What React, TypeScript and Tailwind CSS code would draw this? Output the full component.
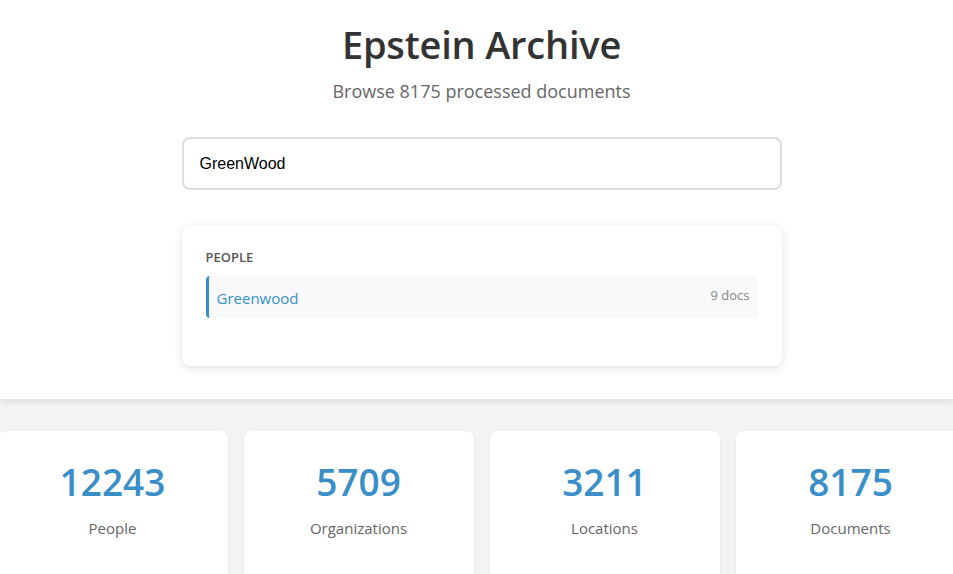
import React from "react";

const stats = [
  { n: "12243", l: "People" },
  { n: "5709", l: "Organizations" },
  { n: "3211", l: "Locations" },
  { n: "8175", l: "Documents" },
];

export default function App() {
  return (
    <div
      className="min-h-screen bg-[#f4f4f4] overflow-hidden"
      style={{ fontFamily: '"Open Sans", "Noto Sans", sans-serif' }}
    >
      <header className="bg-white shadow-[0_2px_8px_rgba(0,0,0,0.12)] pt-[18px] pb-[33px] pl-[10px] flex flex-col items-center">
        <h1 className="text-[38px] leading-[52px] font-semibold text-[#333] tracking-[-0.2px]">
          Epstein Archive
        </h1>
        <p className="mt-[9px] text-[18px] leading-[24px] text-[#666]">
          Browse 8175 processed documents
        </p>
        <div className="mt-[34px] w-[600px]">
          <div className="h-[53px] border-2 border-[#ddd] rounded-[8px] flex items-center px-[16px]">
            <span
              className="text-[16px] text-black"
              style={{ fontFamily: '"Liberation Sans", Arial, sans-serif' }}
            >
              GreenWood
            </span>
          </div>
          <div className="mt-[36px] bg-white rounded-[8px] shadow-[0_2px_8px_rgba(0,0,0,0.12)] px-[24px] pt-[22px] pb-[48px]">
            <div className="text-[13px] font-semibold text-[#555] uppercase leading-[18px]">
              People
            </div>
            <div className="mt-[10px] h-[42px] bg-[#f7f9fa] border-l-[3px] border-[#3a8fc8] rounded-[4px] flex items-center justify-between pl-[8px] pr-[8px]">
              <span className="text-[15px] text-[#3a8fc8] mt-[2px]">Greenwood</span>
              <span className="text-[13px] text-[#888] -mt-[2px]">9 docs</span>
            </div>
          </div>
        </div>
      </header>
      <div className="flex justify-center gap-[16px] pt-[32px] pl-[10px]">
        {stats.map((s) => (
          <div
            key={s.l}
            className="w-[230px] shrink-0 h-[200px] bg-white rounded-[8px] shadow-[0_1px_4px_rgba(0,0,0,0.06)] flex flex-col items-center pt-[26px]"
          >
            <div className="text-[37px] leading-[50px] font-semibold text-[#3a8fc8]">{s.n}</div>
            <div className="mt-[10px] text-[15px] leading-[22px] text-[#666]">{s.l}</div>
          </div>
        ))}
      </div>
    </div>
  );
}
